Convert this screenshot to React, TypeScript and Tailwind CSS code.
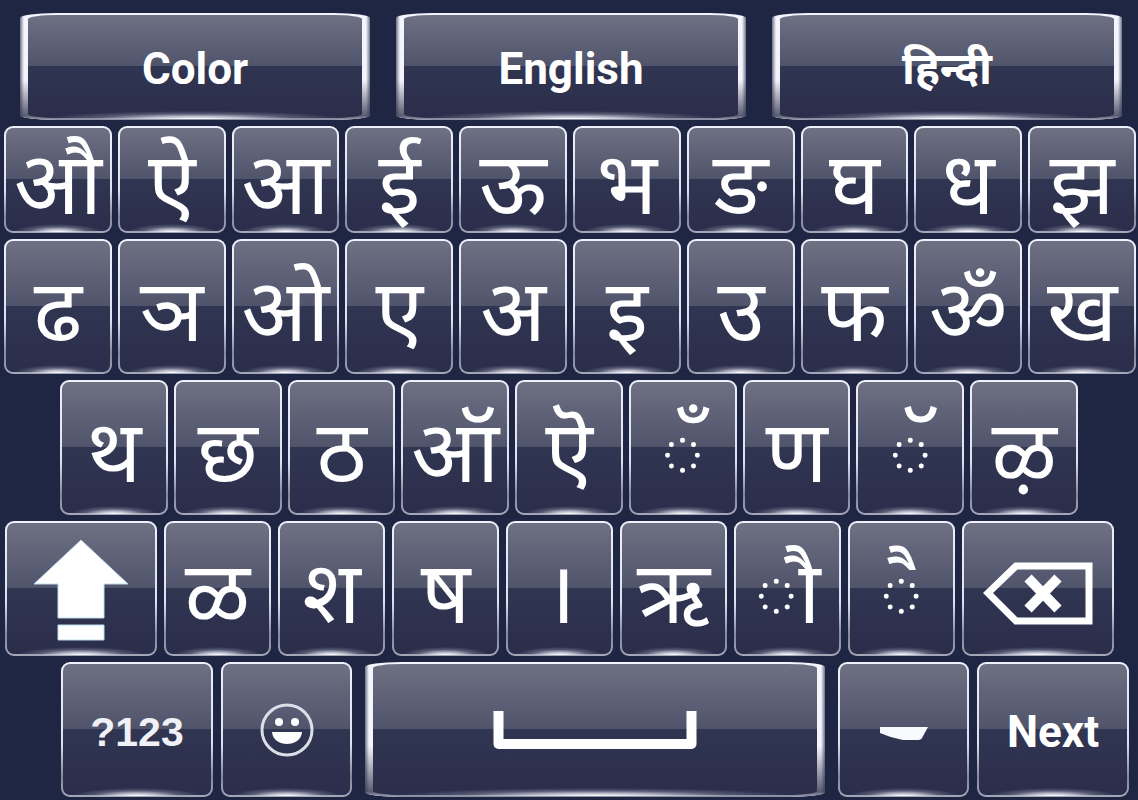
import React from 'react';

interface KeyProps {
  label: string;
  className?: string;
  wide?: boolean;
  children: React.ReactNode;
}

const Key: React.FC<KeyProps> = ({ label, className = '', wide = false, children }) => {
  const frame = wide
    ? 'rounded-[36px/5px] px-[8px] bg-[linear-gradient(to_right,#6f7388,#f4f5fc_4px,#f4f5fc_calc(100%-4px),#6f7388)]'
    : 'rounded-[9px] px-[2px] bg-[linear-gradient(to_bottom,#eef0fb,#dde0ef_60%,#85889a_85%,#a5a8b9)]';
  const face = wide ? 'rounded-[30px/4px]' : 'rounded-[7px]';

  return (
    <button
      type="button"
      aria-label={label}
      className={`relative flex min-w-0 py-[2px] text-white ${frame} ${className}`}
    >
      {wide && (
        <span className="absolute inset-0 rounded-[36px/5px] bg-[linear-gradient(to_bottom,transparent_62%,#34374fcc_96%,#8d91a6_99%)]" />
      )}
      <span
        className={`relative flex min-w-0 flex-1 items-center justify-center bg-[linear-gradient(to_bottom,#6e7083,#50546b_50%,#30345100_50%),linear-gradient(to_bottom,#303552_50%,#2b2e4b)] ${face}`}
      >
        <span className="absolute inset-x-[4px] -bottom-[1px] h-[8px] bg-[radial-gradient(ellipse_46%_100%_at_50%_100%,#ffffff,#d4d6e2cc_35%,#9a9db066_65%,transparent)]" />
        {children}
      </span>
    </button>
  );
};

const Letter: React.FC<{ char: string }> = ({ char }) => (
  <Key label={char}>
    <span className="relative whitespace-nowrap pt-[26px] font-['Noto_Sans_Devanagari','Noto_Sans',sans-serif] text-[86px] leading-[72px]">
      {char}
    </span>
  </Key>
);

const ShiftIcon = () => (
  <svg width="96" height="104" viewBox="0 0 96 104" className="relative mt-[2px]" aria-hidden="true">
    <g fill="#fff" stroke="#b9dcec" strokeWidth="1">
      <path d="M48 2 95 46H71V80H25V46H1Z" />
      <path d="M25 87H71V102H25Z" />
    </g>
  </svg>
);

const DeleteIcon = () => (
  <svg width="112" height="66" viewBox="0 0 112 66" className="relative mt-[8px]" aria-hidden="true">
    <g fill="none" stroke="#fff">
      <path d="M6 33 34 6H107V61H34Z" strokeWidth="7" />
      <path d="M46 18 76 49M76 18 46 49" strokeWidth="10" />
    </g>
  </svg>
);

const SmileIcon = () => (
  <svg width="56" height="56" viewBox="0 0 56 56" className="relative" aria-hidden="true">
    <circle cx="28" cy="28" r="25" fill="none" stroke="#dcdde6" strokeWidth="3" />
    <circle cx="20" cy="20" r="4" fill="#fff" />
    <circle cx="36" cy="20" r="4" fill="#fff" />
    <path d="M13 30H43C42 46 14 46 13 30Z" fill="#fff" />
  </svg>
);

const SpaceIcon = () => (
  <svg width="204" height="40" viewBox="0 0 204 40" className="relative" aria-hidden="true">
    <path d="M5.500 1V34H198.500V1" fill="none" stroke="#fff" strokeWidth="10" strokeLinejoin="round" />
  </svg>
);

const DashIcon = () => (
  <svg width="50" height="16" viewBox="0 0 50 16" className="relative mt-[8px]" aria-hidden="true">
    <path d="M1 1H49L43 12Q42 14 38 14H24Q12 12 1 7Z" fill="#f8f9fc" />
  </svg>
);

const firstRow = ['औ', 'ऐ', 'आ', 'ई', 'ऊ', 'भ', 'ङ', 'घ', 'ध', 'झ'];
const secondRow = ['ढ', 'ञ', 'ओ', 'ए', 'अ', 'इ', 'उ', 'फ', 'ॐ', 'ख'];
const thirdRow = ['थ', 'छ', 'ठ', 'ऑ', 'ऎ', '◌ँ', 'ण', '◌ॅ', 'ऴ'];
const fourthRow = ['ळ', 'श', 'ष', '।', 'ऋ', '◌ौ', '◌ै'];
const languages = ['Color', 'English', 'हिन्दी'];

const App: React.FC = () => {
  return (
    <main className="flex min-h-screen flex-col gap-[6px] overflow-hidden bg-[#1f2643] pt-[13px] pb-[3px]">
      <div className="grid h-[107px] grid-cols-3 gap-[26px] pr-[16px] pl-[20px]">
        {languages.map((name) => (
          <Key key={name} label={name} wide>
            <span className="relative pt-[4px] font-[Roboto,'Noto_Sans_Devanagari','Noto_Sans',sans-serif] text-[44px] leading-[52px] font-bold">
              {name}
            </span>
          </Key>
        ))}
      </div>

      <div className="grid h-[107px] grid-cols-10 gap-[6px] pr-[2px] pl-[4px]">
        {firstRow.map((char) => (
          <Letter key={char} char={char} />
        ))}
      </div>

      <div className="grid h-[135px] grid-cols-10 gap-[6px] pr-[2px] pl-[4px]">
        {secondRow.map((char) => (
          <Letter key={char} char={char} />
        ))}
      </div>

      <div className="grid h-[135px] grid-cols-9 gap-[6px] px-[60px]">
        {thirdRow.map((char) => (
          <Letter key={char} char={char} />
        ))}
      </div>

      <div className="grid h-[135px] grid-cols-[152fr_repeat(7,107fr)_152fr] gap-[7px] pr-[24px] pl-[5px]">
        <Key label="Shift">
          <ShiftIcon />
        </Key>
        {fourthRow.map((char) => (
          <Letter key={char} char={char} />
        ))}
        <Key label="Delete">
          <DeleteIcon />
        </Key>
      </div>

      <div className="grid h-[135px] grid-cols-[152fr_131fr_470fr_131fr_152fr] gap-[8px] pr-[9px] pl-[61px]">
        <Key label="?123">
          <span className="relative pt-[4px] font-['Liberation_Sans',sans-serif] text-[41px] leading-[48px] font-bold text-[#f0f1f6]">
            ?123
          </span>
        </Key>
        <Key label="Emoji">
          <SmileIcon />
        </Key>
        <Key label="Space" wide className="mx-[5px]">
          <SpaceIcon />
        </Key>
        <Key label="Dash">
          <DashIcon />
        </Key>
        <Key label="Next">
          <span className="relative pt-[4px] font-[Roboto,sans-serif] text-[44px] leading-[52px] font-bold">Next</span>
        </Key>
      </div>
    </main>
  );
};

export default App;
